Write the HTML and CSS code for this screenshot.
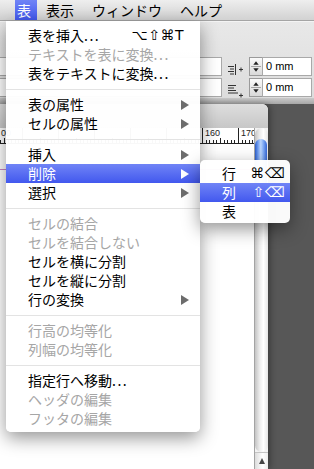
FILE: index.html
```html
<!DOCTYPE html>
<html lang="ja">

<head>
    <meta charset="UTF-8" />
    <meta name="viewport" content="width=device-width, initial-scale=1" />
    <title>表メニュー</title>
    <link rel="stylesheet" href="styles.css">
</head>

<body>
    <div class="menubar">
        <span class="open">表</span>
        <span>表示</span>
        <span>ウィンドウ</span>
        <span>ヘルプ</span>
    </div>

    <div class="toolbar">
        <div class="tool-row">
            <div class="field wide"></div>
            <svg class="tool-icon" viewBox="0 0 16 19">
                <path d="M0 9.5h6M2 12h4M0 14.5h6M2 17h4M7.5 7v11M11 12.5h4M13 10.5v4" stroke="#333" fill="none" />
            </svg>
            <div class="spinner">
                <svg viewBox="0 0 13 19">
                    <path d="M3.5 7.5l3-4 3 4z" fill="#222" />
                    <path d="M1 9.5h11" stroke="#9a9a9a" />
                    <path d="M3.5 11.5l3 4 3-4z" fill="#222" />
                </svg>
            </div>
            <div class="field num">0 mm</div>
        </div>
        <div class="tool-row">
            <div class="field wide"></div>
            <svg class="tool-icon" viewBox="0 0 16 19">
                <path d="M0 7.5h8M0 10h6M0 12.5h8M0 15h10M11 17.5h4M13 15.5v4" stroke="#333" fill="none" />
            </svg>
            <div class="spinner">
                <svg viewBox="0 0 13 19">
                    <path d="M3.5 7.5l3-4 3 4z" fill="#222" />
                    <path d="M1 9.5h11" stroke="#9a9a9a" />
                    <path d="M3.5 11.5l3 4 3-4z" fill="#222" />
                </svg>
            </div>
            <div class="field num">0 mm</div>
        </div>
    </div>
    <div class="toolbar-edge"></div>

    <div class="workspace">
        <div class="window">
            <div class="titlebar"></div>
            <div class="win-body">
                <div class="doc">
                    <!-- メニューの下に隠れる目盛りは数字なし -->
                    <div class="ruler">
                        <span class="first">00</span><span></span><span></span><span></span>
                        <span></span><span></span><span>160</span><span>170</span>
                    </div>
                    <div class="guide"></div>
                </div>
                <div class="scrollbar">
                    <div class="track">
                        <div class="thumb"></div>
                    </div>
                    <div class="sb-btn"></div>
                </div>
            </div>
        </div>
    </div>

    <!-- 表メニュー -->
    <div class="menu">
        <div class="item"><span class="label">表を挿入<span class="dots">...</span></span><span class="key">⌥⇧⌘T</span></div>
        <div class="item off"><span class="label">テキストを表に変換<span class="dots">...</span></span></div>
        <div class="item"><span class="label">表をテキストに変換<span class="dots">...</span></span></div>
        <div class="sep"></div>
        <div class="item sub"><span class="label">表の属性</span></div>
        <div class="item sub"><span class="label">セルの属性</span></div>
        <div class="sep"></div>
        <div class="item sub"><span class="label">挿入</span></div>
        <div class="item sub on"><span class="label">削除</span></div>
        <div class="item sub"><span class="label">選択</span></div>
        <div class="sep"></div>
        <div class="item off"><span class="label">セルの結合</span></div>
        <div class="item off"><span class="label">セルを結合しない</span></div>
        <div class="item"><span class="label">セルを横に分割</span></div>
        <div class="item"><span class="label">セルを縦に分割</span></div>
        <div class="item sub"><span class="label">行の変換</span></div>
        <div class="sep"></div>
        <div class="item off"><span class="label">行高の均等化</span></div>
        <div class="item off"><span class="label">列幅の均等化</span></div>
        <div class="sep"></div>
        <div class="item"><span class="label">指定行へ移動<span class="dots">...</span></span></div>
        <div class="item off"><span class="label">ヘッダの編集</span></div>
        <div class="item off"><span class="label">フッタの編集</span></div>
    </div>

    <!-- 削除サブメニュー -->
    <div class="submenu">
        <div class="item"><span class="label">行</span><span class="key">⌘⌫</span></div>
        <div class="item on"><span class="label">列</span><span class="key">⇧⌫</span></div>
        <div class="item"><span class="label">表</span></div>
    </div>
</body>

</html>
```

FILE: styles.css
```css
:root {
    --font: 'Noto Sans CJK JP', sans-serif;
    --latin: 'Liberation Sans', sans-serif;
    --hilite: linear-gradient(#7084f6, #4258ee);
    --disabled: #a6a6a6;
}

* {
    box-sizing: border-box;
}

html,
body {
    margin: 0;
    padding: 0;
}

body {
    width: 314px;
    height: 469px;
    overflow: hidden;
    position: relative;
    display: flex;
    flex-direction: column;
    font-family: var(--font);
    font-size: 14px;
    color: #000;
    background: #575757;
}

/* メニューバー */
.menubar {
    flex: none;
    height: 21px;
    display: flex;
    padding-left: 15px;
    line-height: 20px;
    background: linear-gradient(#eeeeee, #d2d2d2);
    border-bottom: 1px solid #a5a5a5;
}

.menubar span {
    padding: 0 9px;
}

.menubar .open {
    padding: 0 6px 0 2px;
    color: #fff;
    background: var(--hilite);
}

/* ツールバー */
.toolbar {
    flex: none;
    height: 77px;
    padding-top: 35px;
    display: flex;
    flex-direction: column;
    gap: 2px;
    background: linear-gradient(#e8e8e8, #dddddd);
    border-top: 1px solid #f4f4f4;
}

.tool-row {
    display: flex;
    align-items: center;
    height: 19px;
}

.field {
    height: 19px;
    background: #fff;
    border: 1px solid #a9a9a9;
}

.field.wide {
    width: 222px;
    border-left: 0;
}

.field.num {
    width: 50px;
    padding-left: 3px;
    font: 11px/17px var(--latin);
}

.tool-icon {
    width: 16px;
    height: 19px;
    margin-left: 6px;
    overflow: visible;
}

.spinner {
    width: 13px;
    height: 19px;
    margin-left: 5px;
    border: 1px solid #9a9a9a;
    border-right: 0;
    background: linear-gradient(#fafafa, #d9d9d9);
}

.spinner svg {
    display: block;
    width: 12px;
    height: 17px;
}

.toolbar-edge {
    flex: none;
    height: 6px;
    background: linear-gradient(#c9c9c9, #a7a7a7);
}

/* ドキュメントウィンドウ */
.workspace {
    flex: 1;
    display: flex;
}

.window {
    width: 268px;
    display: flex;
    flex-direction: column;
    border-top-right-radius: 6px;
    overflow: hidden;
    background: #fff;
    box-shadow: 2px 0 6px rgba(0, 0, 0, 0.35);
}

.titlebar {
    flex: none;
    height: 24px;
    background: linear-gradient(#dedede, #c7c7c7);
}

.win-body {
    flex: 1;
    display: flex;
}

.doc {
    flex: 1;
    overflow: hidden;
}

.ruler {
    display: flex;
    height: 16px;
    margin-left: -14px;
    border-bottom: 1px solid #222;
    background: #fff;
}

.ruler span {
    flex: none;
    width: 36px;
    padding-left: 2px;
    font: 9px/11px var(--latin);
    color: #222;
    border-left: 1px solid #222;
    background:
        linear-gradient(#222, #222) 17px 100% / 1px 5px no-repeat,
        repeating-linear-gradient(to right, transparent 0 2.6px, #222 2.6px 3.6px) 0 100% / 100% 3px no-repeat;
}

.ruler .first {
    padding-left: 14px;
}

.guide {
    height: 1px;
    margin-top: 25px;
    background: #c884c4;
}

/* スクロールバー */
.scrollbar {
    flex: none;
    width: 14px;
    display: flex;
    flex-direction: column;
    border-left: 1px solid #a4a4a4;
    background: #f2f2f2;
}

.track {
    flex: 1;
    padding-top: 11px;
    border-radius: 7px;
    background: linear-gradient(90deg, #c4c4c4, #ebebeb 35%, #ffffff 65%, #e4e4e4);
}

.thumb {
    height: 58px;
    margin: 0 1px 0 0;
    border-radius: 7px;
    background: linear-gradient(90deg, #2d5ec8, #6f9df0 25%, #bcd6fb 48%, #79a5f2 72%, #3566d3);
}

.sb-btn {
    flex: none;
    height: 17px;
    display: flex;
    align-items: center;
    justify-content: center;
    border-top: 1px solid #c4c4c4;
    background: linear-gradient(90deg, #dcdcdc, #ffffff 60%, #ececec);
}

.sb-btn::before {
    content: "";
    border-bottom: 6px solid #444;
    border-left: 3.5px solid transparent;
    border-right: 3.5px solid transparent;
}

/* プルダウンメニュー */
.menu,
.submenu {
    position: absolute;
    background: rgba(255, 255, 255, 0.97);
    box-shadow: 0 6px 18px rgba(0, 0, 0, 0.42);
}

.menu {
    left: 6px;
    top: 21px;
    width: 194px;
    padding: 5px 0 4px;
    border-radius: 0 0 5px 5px;
}

.submenu {
    left: 200px;
    top: 160px;
    width: 90px;
    padding: 4px 0 2px;
    border-radius: 5px;
}

.item {
    display: flex;
    align-items: center;
    height: 19px;
    line-height: 19px;
    padding: 0 11px 0 22px;
    white-space: nowrap;
}

.submenu .item {
    padding: 0 5px 0 22px;
}

.item .label {
    flex: 1;
}

.item.off {
    color: var(--disabled);
}

.item.on {
    color: #fff;
    background: var(--hilite);
}

.dots {
    letter-spacing: 1.5px;
}

.key {
    font-family: 'DejaVu Sans', sans-serif;
    font-size: 14px;
    letter-spacing: 0.5px;
}

.menu .key {
    margin-right: 5px;
}

/* サブメニューの三角 */
.item.sub::after {
    content: "";
    border-left: 8px solid #6c6c6c;
    border-top: 5px solid transparent;
    border-bottom: 5px solid transparent;
}

.item.sub.on::after {
    border-left-color: #fff;
}

.sep {
    height: 12px;
    background: linear-gradient(#e3e3e3, #e3e3e3) 0 6px / 100% 1px no-repeat;
}
```
